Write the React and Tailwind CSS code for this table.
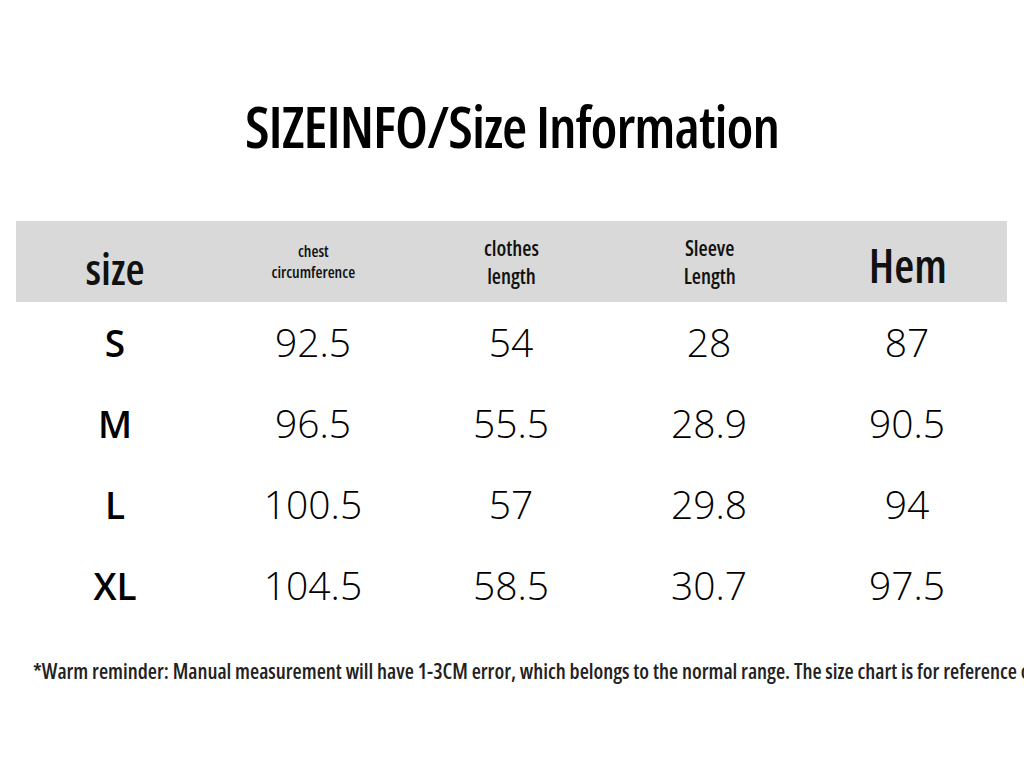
import React from "react";

const rows = [
  ["S", "92.5", "54", "28", "87"],
  ["M", "96.5", "55.5", "28.9", "90.5"],
  ["L", "100.5", "57", "29.8", "94"],
  ["XL", "104.5", "58.5", "30.7", "97.5"],
];

export default function App() {
  return (
    <div className="w-[1024px] h-[768px] bg-white overflow-hidden">
      <h1 className="pt-[90px] h-[221px] text-center text-[58px] leading-[72px] tracking-[-1px] font-semibold text-black font-['Open_Sans',sans-serif] font-stretch-[75%]">
        SIZEINFO/Size Information
      </h1>
      <div className="px-4">
        <div className="grid grid-cols-5 w-[991px] h-[81px] bg-[#d9d9d9] items-center text-center text-[#111] font-['Open_Sans',sans-serif] font-stretch-[75%] font-semibold">
          <div className="text-[44px] pt-3">size</div>
          <div className="text-[16px] leading-[21px]">chest<br />circumference</div>
          <div className="text-[21px] leading-[28px]">clothes<br />length</div>
          <div className="text-[21px] leading-[28px]">Sleeve<br />Length</div>
          <div className="text-[46px] pt-2">Hem</div>
        </div>
        {rows.map((r) => (
          <div key={r[0]} className="grid grid-cols-5 w-[990px] h-[81px] items-center text-center text-black font-['Open_Sans',sans-serif]">
            <div className="text-[37px] font-semibold">{r[0]}</div>
            {r.slice(1).map((v, i) => (
              <div key={i} className="text-[39px] font-light">{v}</div>
            ))}
          </div>
        ))}
      </div>
      <p className="pl-[33px] mt-[30px] whitespace-nowrap text-[21px] text-[#222] font-semibold font-['Open_Sans',sans-serif] font-stretch-[75%]">
        *Warm reminder: Manual measurement will have 1-3CM error, which belongs to the normal range. The size chart is for reference only.
      </p>
    </div>
  );
}
